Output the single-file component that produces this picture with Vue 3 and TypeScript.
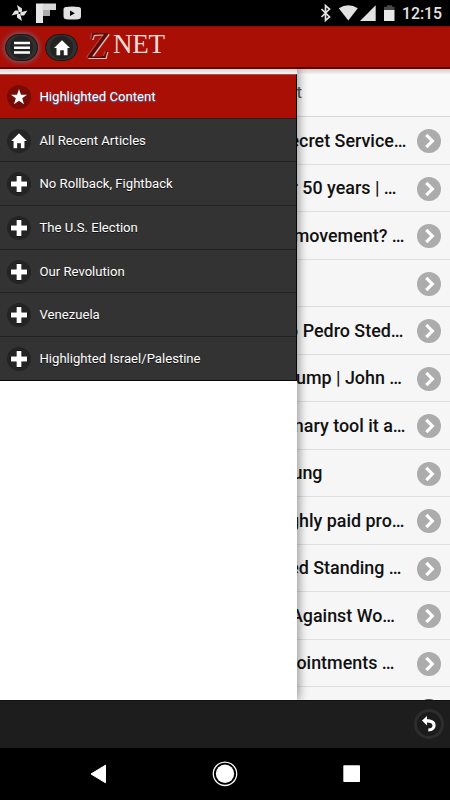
<script setup lang="ts">
interface MenuItem {
  label: string
  icon: 'star' | 'home' | 'plus'
}
interface Article {
  title: string
  inset: number
}

const menu: MenuItem[] = [
  { label: 'Highlighted Content', icon: 'star' },
  { label: 'All Recent Articles', icon: 'home' },
  { label: 'No Rollback, Fightback', icon: 'plus' },
  { label: 'The U.S. Election', icon: 'plus' },
  { label: 'Our Revolution', icon: 'plus' },
  { label: 'Venezuela', icon: 'plus' },
  { label: 'Highlighted Israel/Palestine', icon: 'plus' },
]

const paths: Record<MenuItem['icon'], string> = {
  star: 'M12 4l2 5.7h6l-4.8 3.6 1.8 5.9-5-3.5-5 3.5 1.8-5.9L4 9.700h6z',
  home: 'M12 4.200L4 12.100h2.500v7.200h3.700v-5h3.600v5h3.700v-7.200H20z',
  plus: 'M9.600 4h4.800v5.600H20v4.800h-5.600V20H9.600v-5.600H4V9.600h5.600z',
}

// inset: space between the end of the title and the right screen edge
const articles: Article[] = [
  { title: 'ecret Service…', inset: 43.5 },
  { title: 'r 50 years | …', inset: 53.5 },
  { title: 'movement? …', inset: 45.5 },
  { title: '', inset: 45 },
  { title: 'o Pedro Sted…', inset: 46.5 },
  { title: 'rump | John …', inset: 48 },
  { title: 'nary tool it a…', inset: 44.5 },
  { title: 'ung', inset: 127.5 },
  { title: 'ghly paid pro…', inset: 45.5 },
  { title: 'ed Standing …', inset: 48.5 },
  { title: 'Against Wo…', inset: 55 },
  { title: 'ointments …', inset: 55.5 },
  { title: '', inset: 55 },
]
</script>

<template>
  <div class="screen">
    <div class="status">
      <svg class="s-left" width="90" height="26" viewBox="0 0 90 26">
        <g fill="#e4e4e4">
          <path d="M19 13l-2-8 5 3.500v3z" />
          <path d="M19 13l-2-8 5 3.500v3z" transform="rotate(90 19.500 13)" />
          <path d="M19 13l-2-8 5 3.500v3z" transform="rotate(180 19.500 13)" />
          <path d="M19 13l-2-8 5 3.500v3z" transform="rotate(270 19.500 13)" />
        </g>
        <circle cx="19.500" cy="13" r="1" fill="#000" />
        <path d="M36 3.500h7V23h-7z" fill="#e6e6e6" />
        <path d="M42.500 3.500h13.500v6.500H42.500z" fill="#d6d6d6" />
        <path d="M43 10h7v6h-7z" fill="#ababab" />
        <path d="M66 7q6-.8 12.500 0Q81 7 81 9.500v7q0 2.500-2.500 2.700-6.500.8-12.500 0-2.500-.2-2.500-2.700v-7Q63.500 7 66 7z" fill="#e2e2e2" />
        <path d="M70 10.600l4.800 2.700L70 16z" fill="#000" />
      </svg>
      <svg class="s-right" width="80" height="26" viewBox="318 0 80 26">
        <path d="M321.500 9l8 8-4 3.500V5.500l4 3.500-8 8" fill="none" stroke="#e2e2e2" stroke-width="1.700" />
        <path d="M338.800 8.200q9.500-6 19 0L348.300 20.500z" fill="#e2e2e2" />
        <path d="M375.700 5.200V21H360z" fill="#e2e2e2" />
        <path d="M387 5.200h5v1.500h2.500v4H384v-4h3z" fill="#484848" />
        <path d="M384 10h10.500v11H384z" fill="#e8e8e8" />
      </svg>
      <span class="clock">12:15</span>
    </div>

    <header class="bar">
      <button class="round glow" aria-label="Menu">
        <svg width="24" height="24" viewBox="0 0 24 24"><path d="M4 7h16M4 11.800h16M4 16.600h16" stroke="#fff" stroke-width="2.500" /></svg>
      </button>
      <button class="round home" aria-label="Home">
        <svg width="24" height="24" viewBox="0 0 24 24"><path :d="paths.home" fill="#fff" /></svg>
      </button>
      <div class="logo"><span class="z">Z</span><span class="net">NET</span></div>
    </header>

    <main class="content">
      <div class="head">t</div>
      <div v-for="(a, i) in articles" :key="i" class="article" :style="{ paddingRight: a.inset + 'px' }">
        <span class="title">{{ a.title }}</span>
        <svg class="go" width="24" height="24" viewBox="0 0 24 24">
          <circle cx="12" cy="12" r="12" :fill="i === articles.length - 1 ? '#555' : '#acacac'" />
          <path d="M9.300 5.800l6 6.200-6 6.200" fill="none" stroke="#fff" stroke-width="3.200" />
        </svg>
      </div>

      <aside class="panel">
        <nav class="menu">
          <div v-for="(m, i) in menu" :key="m.label" class="item" :class="{ active: i === 0 }">
            <span class="disc">
              <svg width="24" height="24" viewBox="0 0 24 24">
                <path :d="paths[m.icon]" fill="#fff" :class="{ edged: i > 0 }" />
              </svg>
            </span>
            <span class="label">{{ m.label }}</span>
          </div>
        </nav>
      </aside>
      <div class="bar-shade"></div>
    </main>

    <footer class="foot">
      <span class="back">
        <svg width="24" height="24" viewBox="0 0 24 24">
          <path d="M5 8.500l5-4.500v3.300c6 0 8.600 2.400 8.600 6 0 3.800-3 6-7.300 6.200v-2.900c2.800-.2 4.200-1.300 4.200-3.100 0-2.100-1.800-3.100-5.500-3.100v3z" fill="#fff" />
        </svg>
      </span>
    </footer>

    <div class="nav">
      <svg width="450" height="52" viewBox="0 748 450 52">
        <path d="M91 774l14.500-8.800v17.600z" fill="#fff" stroke="#fff" stroke-width="1" stroke-linejoin="round" />
        <circle cx="225" cy="773.800" r="9.200" fill="#fff" />
        <circle cx="225" cy="773.800" r="11.700" fill="none" stroke="#fff" stroke-width="1.300" />
        <rect x="343.300" y="765.300" width="16.700" height="16.700" rx=".7" fill="#fff" />
      </svg>
    </div>
  </div>
</template>

<style>
body {
  margin: 0;
  background: #000;
}
</style>

<style scoped>
.screen {
  width: 450px;
  height: 800px;
  display: flex;
  flex-direction: column;
  overflow: hidden;
  font-family: Roboto, 'Liberation Sans', sans-serif;
  background: #000;
}
.status {
  height: 26px;
  flex: none;
  display: flex;
  align-items: center;
}
.s-right {
  margin-left: 228px;
}
.clock {
  margin-left: 4px;
  margin-top: 2px;
  color: #e4e4e4;
  font-size: 15.8px;
  font-weight: 500;
  line-height: 20px;
  white-space: nowrap;
}
.bar {
  height: 43px;
  flex: none;
  box-sizing: border-box;
  display: flex;
  align-items: flex-start;
  padding: 7px 0 0 5px;
  background: #aa0f06;
  border-top: 1px solid #830905;
  border-bottom: 2px solid #680000;
}
.round {
  width: 33px;
  height: 27px;
  padding: 0;
  display: flex;
  align-items: center;
  justify-content: center;
  border: 1px solid #171717;
  border-radius: 13.5px;
  background: radial-gradient(circle, #222 0 11px, #303030 12px);
}
.glow {
  box-shadow: 0 0 5px 1px #71647a;
}
.home {
  margin-left: 7px;
}
.logo {
  display: flex;
  align-items: baseline;
  margin: -11px 0 0 9px;
  font-family: 'Liberation Serif', serif;
  line-height: 44px;
}
.z {
  width: 26px;
  font-size: 38px;
  font-style: italic;
  color: #600704;
  text-shadow: 1px 1px 0 #e2c5c2, -1px 0 0 #a8564f;
}
.net {
  position: relative;
  top: -5px;
  font-size: 27px;
  color: #f5dcda;
  letter-spacing: -0.2px;
}
.content {
  position: relative;
  height: 631px;
  flex: none;
  overflow: hidden;
  background: #f6f6f6;
}
.head {
  height: 48px;
  box-sizing: border-box;
  padding: 0 148px 0 0;
  border-bottom: 1.500px solid #d9d9d9;
  background: #f9f9f9;
  color: #505050;
  font-size: 17px;
  line-height: 47px;
  text-align: right;
}
.article {
  position: relative;
  height: 47.520px;
  box-sizing: border-box;
  border-bottom: 1.500px solid #dedede;
  display: flex;
  align-items: center;
  justify-content: flex-end;
}
.title {
  font-size: 17.9px;
  font-weight: 500;
  color: #111;
  white-space: nowrap;
}
.go {
  position: absolute;
  right: 9px;
  top: 12.2px;
}
.panel {
  position: absolute;
  left: 0;
  top: 0;
  width: 297px;
  height: 631px;
  background: #fff;
  box-shadow: 2px 0 9px rgba(0, 0, 0, 0.4);
}
.menu {
  width: 297px;
  margin-top: 5px;
  box-sizing: border-box;
  border-top: 1px solid #b34d48;
  border-right: 1px solid #080808;
  border-bottom: 1px solid #080808;
}
.item {
  height: 43.700px;
  box-sizing: border-box;
  display: flex;
  align-items: center;
  padding: 0 0 0 6.500px;
  border-bottom: 1px solid #222;
  background: #333;
  color: #fff;
  font-size: 13.120px;
  text-shadow: 0 1px 0 #111;
}
.item:last-child {
  height: 42.800px;
  border-bottom: 0;
}
.item.active {
  background: #aa0f06;
  text-shadow: 0 1px 1px #3388cc;
}
.disc {
  width: 24px;
  height: 24px;
  margin-top: 1px;
  border-radius: 50%;
  background: #242424;
}
.disc svg,
.back svg {
  display: block;
}
.active .disc {
  background: #780b05;
}
.edged {
  stroke: #080808;
  stroke-width: 1px;
  paint-order: stroke;
}
.label {
  margin-left: 9px;
  white-space: nowrap;
}
.bar-shade {
  position: absolute;
  left: 0;
  right: 0;
  top: 0;
  height: 5px;
  background: linear-gradient(rgba(0, 0, 0, 0.17), rgba(0, 0, 0, 0.03));
}
.foot {
  height: 48px;
  flex: none;
  box-sizing: border-box;
  display: flex;
  justify-content: flex-end;
  padding: 8px 6px 0 0;
  background: #1d1d1d;
  border-top: 1px solid #111;
}
.back {
  width: 24px;
  height: 24px;
  border: 3px solid #2d2d2d;
  border-radius: 50%;
  background: #1b1b1b;
}
.nav {
  height: 52px;
  flex: none;
}
</style>
